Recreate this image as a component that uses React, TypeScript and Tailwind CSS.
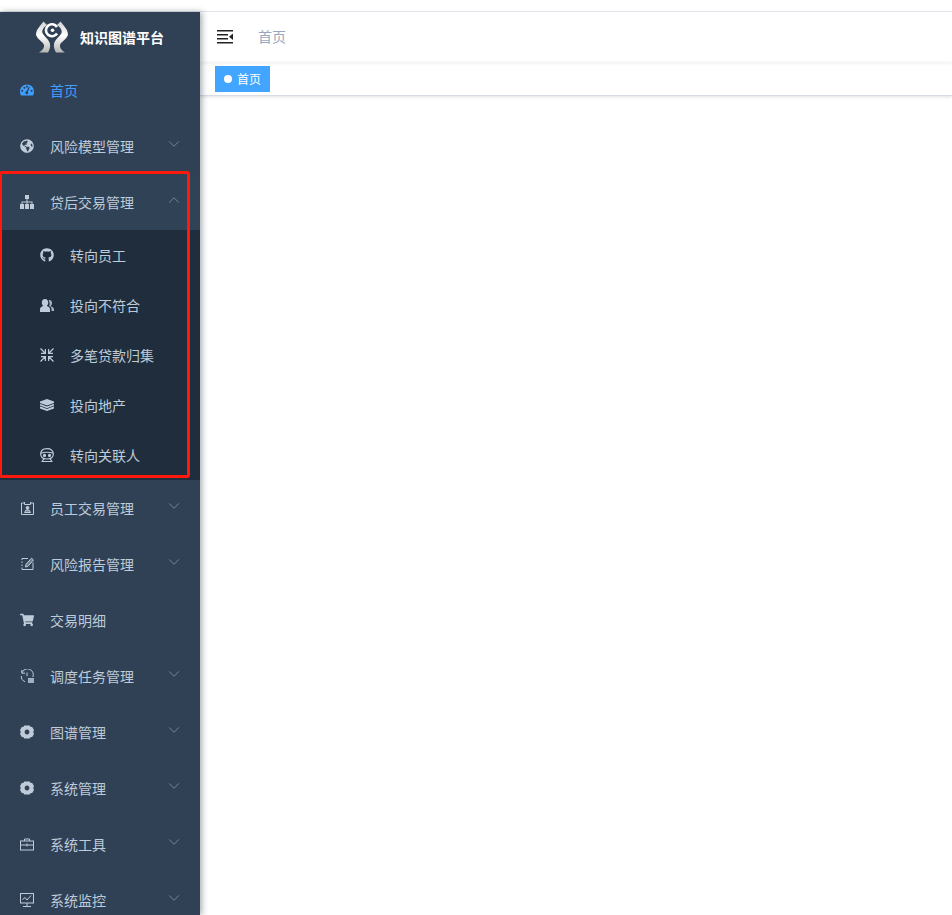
import React from "react";
import { FaGithub, FaGlobeAmericas, FaShoppingCart } from "react-icons/fa";
import { ChevronDown, ChevronUp } from "lucide-react";

const cn = "text-[#bfcbd9]";

const Gauge = () => (
  <svg width="15" height="12" viewBox="0 0 14 11" fill="currentColor">
    <path fillRule="evenodd" d="M7 0 C3 0 0 3 0 7 C0 8.5 0.3 9.8 1 11 H13 C13.7 9.8 14 8.5 14 7 C14 3 11 0 7 0 Z M2.2 5.2 a1 1 0 1 0 0.01 0 Z M4.4 2.2 a1 1 0 1 0 0.01 0 Z M7 1.1 a1 1 0 1 0 0.01 0 Z M11.6 5.2 a1 1 0 1 0 0.01 0 Z M9.8 2.6 L7.9 7.2 A1.5 1.5 0 1 1 6.6 6.7 L8.7 2.2 Z" />
  </svg>
);
const Sitemap = () => (
  <svg width="14" height="14" viewBox="0 0 14 14" fill="currentColor">
    <rect x="5" y="0" width="4" height="4" />
    <path d="M6.5 4 H7.5 V6.5 H12.5 V9 H11.5 V7.5 H7.5 V9 H6.5 V7.5 H2.5 V9 H1.5 V6.5 H6.5 Z" />
    <rect x="0" y="9" width="4" height="5" /><rect x="5" y="9" width="4" height="5" /><rect x="10" y="9" width="4" height="5" />
  </svg>
);
const Peoples = () => (
  <svg width="14" height="13" viewBox="0 0 14 13" fill="currentColor">
    <path d="M9.5 1 C11.2 1 12 2.4 12 4 C12 5.4 11.4 6.5 10.6 7.2 C12.5 8 14 8.8 14 10 V12 H11.5 V10 C11.5 8.6 10.4 7.6 9.2 7 C9.8 5.6 10 3 8.6 1.2 Z" opacity="0.85" />
    <path d="M5 0 C7 0 8.3 1.6 8.3 3.6 C8.3 5 7.6 6.2 6.8 6.9 C8.8 7.6 10 8.8 10 10 V13 H0 V10 C0 8.8 1.2 7.6 3.2 6.9 C2.4 6.2 1.8 5 1.8 3.6 C1.8 1.6 3 0 5 0 Z" />
  </svg>
);
const Compress = () => (
  <svg width="14" height="14" viewBox="0 0 14 14" fill="none" stroke="currentColor" strokeWidth="1.2">
    <path d="M0.5 0.5 L5 5 M1 5.4 H5.4 V1 M13.5 0.5 L9 5 M13 5.4 H8.6 V1 M0.5 13.5 L5 9 M1 8.6 H5.4 V13 M13.5 13.5 L9 9 M13 8.6 H8.6 V13" />
  </svg>
);
const Stack = () => (
  <svg width="14" height="12" viewBox="0 0 14 12" fill="currentColor">
    <path d="M7 0 L14 2.6 V4 L7 6.6 L0 4 V2.6 Z" />
    <path d="M0.6 4.9 L7 7.4 L13.4 4.9 L14 5.2 V6.6 L7 9.2 L0 6.6 V5.2 Z" />
    <path d="M0.6 7.5 L7 10 L13.4 7.5 L14 7.8 V9.4 L7 12 L0 9.4 V7.8 Z" />
  </svg>
);
const Robot = () => (
  <svg width="14" height="14" viewBox="0 0 14 14" fill="none" stroke="currentColor" strokeWidth="1.2">
    <path d="M0.7 6 C0.7 2.4 3.4 0.6 7 0.6 C10.6 0.6 13.3 2.4 13.3 6 C13.3 9.4 11 11 7 11 C3 11 0.7 9.4 0.7 6 Z" />
    <path d="M0.7 5.2 C4 3.9 10 3.9 13.3 5.2 M3.8 10.8 L2.2 13.5 H11.8 L10.2 10.8" />
    <circle cx="4.5" cy="7.4" r="1" fill="currentColor" /><circle cx="9.5" cy="7.4" r="1" fill="currentColor" />
  </svg>
);
const Badge = () => (
  <svg width="13" height="13" viewBox="0 0 13 13" fill="none" stroke="currentColor" strokeWidth="1">
    <path d="M3.5 1 H0.5 V12.5 H12.5 V1 H9.5" />
    <path d="M3.5 0 V2.5 H9.5 V0" />
    <circle cx="6.5" cy="5.8" r="1.4" fill="currentColor" />
    <path d="M3.5 10.5 L5 8 H8 L9.5 10.5 Z" fill="currentColor" fillOpacity="0.5" />
  </svg>
);
const Report = () => (
  <svg width="13" height="14" viewBox="0 0 13 14" fill="none" stroke="currentColor" strokeWidth="1">
    <path d="M7 1.5 H1 V3 M1 4.5 V6 M1 7.5 V9 M1 10.5 V12.5 H12 V5.5" />
    <path d="M4.5 10 L5 7.3 L10.5 1.2 L12.5 3 L7 9.3 Z" fill="currentColor" fillOpacity="0.45" />
  </svg>
);
const Schedule = () => (
  <svg width="14" height="14" viewBox="0 0 14 14" fill="none" stroke="currentColor" strokeWidth="1">
    <path d="M2 3.8 A5.8 5.8 0 1 1 12.8 8 M1.8 1 V4.2 H5 M1.3 7 A5.8 5.8 0 0 0 5 12.7 M7 3.5 V7" />
    <rect x="8" y="9" width="6" height="5" fill="currentColor" stroke="none" opacity="0.8" />
  </svg>
);
const Gear = () => (
  <svg width="14" height="14" viewBox="0 0 14 14" fill="currentColor">
    <path fillRule="evenodd" d="M4.3 0.4 H9.7 L10.4 1.8 L12.2 2 L14 5.1 L13.2 7 L14 8.9 L12.2 12 L10.4 12.2 L9.7 13.6 H4.3 L3.6 12.2 L1.8 12 L0 8.9 L0.8 7 L0 5.1 L1.8 2 L3.6 1.8 Z M7 4.6 a2.4 2.4 0 1 0 0.01 0 Z" />
  </svg>
);
const Toolbox = () => (
  <svg width="14" height="13" viewBox="0 0 14 13" fill="none" stroke="currentColor" strokeWidth="1">
    <rect x="0.5" y="3" width="13" height="9" />
    <path d="M4.5 3 V1 H9.5 V3 M0.5 7 H13.5 M7 5.5 V8.5" />
  </svg>
);
const Monitor = () => (
  <svg width="14" height="14" viewBox="0 0 14 14" fill="none" stroke="currentColor" strokeWidth="1">
    <rect x="0.5" y="0.5" width="13" height="9.5" />
    <path d="M2.5 6.5 L5 4.5 L7 7 L11 2.5 M7 10 V13 M3 13.5 H11" />
  </svg>
);
const Logo = () => (
  <svg width="32" height="32" viewBox="0 0 32 32">
    <defs>
      <linearGradient id="lg" x1="0" y1="0" x2="0" y2="1">
        <stop offset="0" stopColor="#cfcfcf" /><stop offset="0.45" stopColor="#ffffff" /><stop offset="1" stopColor="#b5b5b5" />
      </linearGradient>
    </defs>
    <path d="M7.5 0.5 L11 4 C8 6 5.5 9 6.5 12 C8 15.5 13 18 14 23 C14.5 26 13.5 29 12 31.5 L3 31.5 C6 29.5 8.5 27 8 24 C7.5 21 1 18.5 0 13.5 C0 8.5 5 4 7.5 0.5 Z" fill="url(#lg)" />
    <path d="M24.5 0.5 L21 4 C24 6 26.5 9 25.5 12 C24 15.5 19 18 18 23 C17.5 26 18.5 29 20 31.5 L29 31.5 C26 29.5 23.5 27 24 24 C24.5 21 31 18.5 32 13.5 C32 8.5 27 4 24.5 0.5 Z" fill="url(#lg)" />
    <path d="M21 6 A6 6 0 1 0 21 12.5" fill="none" stroke="#fff" strokeWidth="2.6" />
    <circle cx="16.5" cy="9.2" r="1.8" fill="#fff" />
  </svg>
);

type It = { icon: React.ReactNode; label: string; arrow?: boolean; open?: boolean; active?: boolean };

const Row = ({ icon, label, arrow, open, active }: It) => (
  <div className={`relative flex h-14 items-center pl-5 text-sm ${open ? "bg-[#2f4256]" : ""} ${active ? "text-[#409eff]" : cn}`}>
    <span className={`flex w-[14px] justify-center ${active ? "text-[#409eff]" : "text-[#bfcbd9]"}`}>{icon}</span>
    <span className="ml-4">{label}</span>
    {arrow && (
      <span className="absolute right-[17px] top-[17px] text-[#7f8c9c]">
        {open ? <ChevronUp size={18} strokeWidth={1.2} /> : <ChevronDown size={18} strokeWidth={1.2} />}
      </span>
    )}
  </div>
);
const Sub = ({ icon, label }: { icon: React.ReactNode; label: string }) => (
  <div className={`flex h-[50px] items-center pl-10 text-sm ${cn}`}>
    <span className="flex w-[14px] justify-center text-[#bfcbd9]">{icon}</span>
    <span className="ml-4">{label}</span>
  </div>
);

export default function App() {
  return (
    <div className="flex h-[915px] w-[952px] flex-col overflow-hidden bg-white font-['Noto_Sans_CJK_SC',sans-serif]">
      <div className="h-3 shrink-0 border-b border-[#e4e7ed] bg-white" />
      <div className="flex min-h-0 flex-1">
        <aside className="relative z-10 w-[200px] shrink-0 overflow-hidden bg-[#304156] shadow-[2px_0_6px_rgba(0,21,41,0.35)]">
          <div className="flex h-[50px] items-center pl-[36px]">
            <Logo />
            <span className="ml-3 text-[14px] font-bold text-white">知识图谱平台</span>
          </div>
          <Row active icon={<Gauge />} label="首页" />
          <Row arrow icon={<FaGlobeAmericas size={14} />} label="风险模型管理" />
          <Row arrow open icon={<Sitemap />} label="贷后交易管理" />
          <div className="bg-[#1f2d3d]">
            <Sub icon={<FaGithub size={14} />} label="转向员工" />
            <Sub icon={<Peoples />} label="投向不符合" />
            <Sub icon={<Compress />} label="多笔贷款归集" />
            <Sub icon={<Stack />} label="投向地产" />
            <Sub icon={<Robot />} label="转向关联人" />
          </div>
          <Row arrow icon={<Badge />} label="员工交易管理" />
          <Row arrow icon={<Report />} label="风险报告管理" />
          <Row icon={<FaShoppingCart size={14} />} label="交易明细" />
          <Row arrow icon={<Schedule />} label="调度任务管理" />
          <Row arrow icon={<Gear />} label="图谱管理" />
          <Row arrow icon={<Gear />} label="系统管理" />
          <Row arrow icon={<Toolbox />} label="系统工具" />
          <Row arrow icon={<Monitor />} label="系统监控" />
          <div className="absolute -left-px top-[159px] h-[307px] w-[191px] rounded-[3px] border-[3px] border-[#ff1a0d]" />
        </aside>
        <main className="min-w-0 flex-1">
          <div className="flex h-[50px] items-center pl-[17px] shadow-[0_1px_4px_rgba(0,21,41,0.08)]">
            <svg width="16" height="14" viewBox="0 0 16 14" className="text-[#222]" fill="currentColor">
              <path d="M0 0 H16 V1.5 H0 Z M0 4 H11 V5.5 H0 Z M0 8 H11 V9.5 H0 Z M0 12 H16 V13.5 H0 Z M16 3.5 V10 L12 6.75 Z" />
            </svg>
            <span className="mb-0.5 ml-[25px] text-sm text-[#97a8be]">首页</span>
          </div>
          <div className="flex h-[34px] items-center border-b border-[#d8dce5] pl-[15px] shadow-[0_1px_3px_rgba(0,0,0,0.12)]">
            <div className="flex h-[26px] w-[55px] items-center bg-[#42a5ff] pl-[9px] text-xs text-white">
              <span className="mr-[5px] h-2 w-2 rounded-full bg-white" />
              首页
            </div>
          </div>
        </main>
      </div>
    </div>
  );
}
